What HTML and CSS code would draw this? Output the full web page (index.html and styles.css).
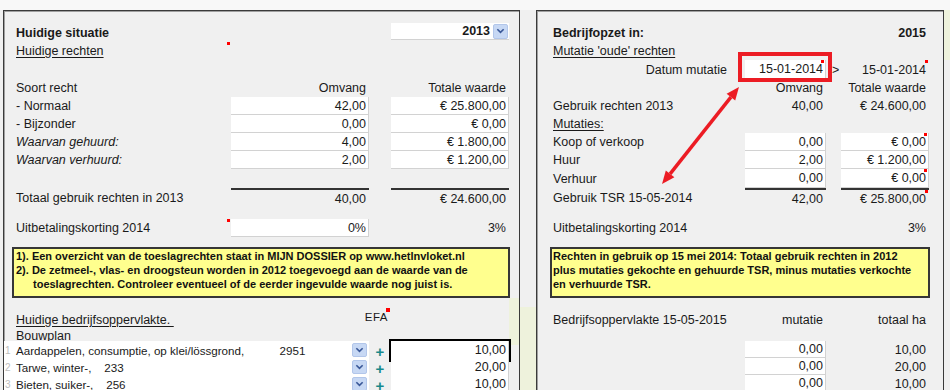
FILE: index.html
```html
<!DOCTYPE html>
<html lang="nl">
<head>
  <meta charset="UTF-8" />
  <title>Bedrijfsopzet toeslagrechten</title>
  <link rel="stylesheet" href="styles.css">
</head>
<body>
  <div class="topstrip"></div>
  <div class="sheet">

    <div class="panel left">
      <div class="row h19">
        <div class="b">Huidige situatie</div><div></div><div></div>
        <div class="select"><span>2013</span><span class="drop"><svg viewBox="0 0 10 6"><path d="M1.5 1l3.5 3.5 3.5-3.5"/></svg></span></div>
      </div>
      <div class="row">
        <div class="note"><span class="u">Huidige rechten</span></div><div></div><div></div><div></div>
      </div>
      <div class="gap h19"></div>
      <div class="row">
        <div>Soort recht</div><div class="r">Omvang</div><div></div><div class="r">Totale waarde</div>
      </div>
      <div class="row">
        <div>- Normaal</div><div class="box r">42,00</div><div></div><div class="box r">€ 25.800,00</div>
      </div>
      <div class="row">
        <div>- Bijzonder</div><div class="box r">0,00</div><div></div><div class="box r">€ 0,00</div>
      </div>
      <div class="row">
        <div class="i">Waarvan gehuurd:</div><div class="box r">4,00</div><div></div><div class="box r">€ 1.800,00</div>
      </div>
      <div class="row">
        <div class="i">Waarvan verhuurd:</div><div class="box r">2,00</div><div></div><div class="box r">€ 1.200,00</div>
      </div>
      <div class="gap h19"></div>
      <div class="row sum">
        <div>Totaal gebruik rechten in 2013</div><div class="r line">40,00</div><div></div><div class="r line">€ 24.600,00</div>
      </div>
      <div class="gap h11"></div>
      <div class="row">
        <div class="note">Uitbetalingskorting 2014</div><div class="box r">0%</div><div></div><div class="r">3%</div>
      </div>
      <div class="gap h10"></div>
      <div class="memo">
        <div>1). Een overzicht van de toeslagrechten staat in MIJN DOSSIER op www.hetlnvloket.nl</div>
        <div>2). De zetmeel-, vlas- en droogsteun worden in 2012 toegevoegd aan de waarde van de</div>
        <div class="indent">toeslagrechten. Controleer eventueel of de eerder ingevulde waarde nog juist is.</div>
      </div>
      <div class="gap h13"></div>
      <div class="row">
        <div><span class="u">Huidige bedrijfsoppervlakte.&nbsp;</span></div><div></div><div class="efa">EFA</div><div></div>
      </div>
      <div class="row h12">
        <div>Bouwplan</div><div></div><div></div><div></div>
      </div>
      <div class="row h17">
        <div class="crop"><span class="rn">1</span><span class="crop-text">Aardappelen, consumptie, op klei/lössgrond,           2951</span><span class="drop"><svg viewBox="0 0 10 6"><path d="M1.5 1l3.5 3.5 3.5-3.5"/></svg></span></div>
        <div class="plus">+</div><div class="box r sel">10,00</div>
      </div>
      <div class="row h17">
        <div class="crop"><span class="rn">2</span><span class="crop-text">Tarwe, winter-,    233</span><span class="drop"><svg viewBox="0 0 10 6"><path d="M1.5 1l3.5 3.5 3.5-3.5"/></svg></span></div>
        <div class="plus">+</div><div class="box r">20,00</div>
      </div>
      <div class="row h17">
        <div class="crop"><span class="rn">3</span><span class="crop-text">Bieten, suiker-,    256</span><span class="drop"><svg viewBox="0 0 10 6"><path d="M1.5 1l3.5 3.5 3.5-3.5"/></svg></span></div>
        <div class="plus">+</div><div class="box r">10,00</div>
      </div>
    </div>

    <div class="gutter"></div>

    <div class="panel right">
      <div class="row h19">
        <div class="b">Bedrijfopzet in:</div><div></div><div></div><div class="b r">2015</div>
      </div>
      <div class="row">
        <div><span class="u">Mutatie 'oude' rechten</span></div><div></div><div></div><div></div>
      </div>
      <div class="row h19">
        <div class="r lbl">Datum mutatie</div>
        <div class="box r datum note">15-01-2014</div>
        <div class="gt">&gt;</div>
        <div class="r note">15-01-2014</div>
      </div>
      <div class="row">
        <div></div><div class="r">Omvang</div><div></div><div class="r">Totale waarde</div>
      </div>
      <div class="row">
        <div>Gebruik rechten 2013</div><div class="r">40,00</div><div></div><div class="r">€ 24.600,00</div>
      </div>
      <div class="row">
        <div><span class="u">Mutaties:</span></div><div></div><div></div><div></div>
      </div>
      <div class="row">
        <div>Koop of verkoop</div><div class="box r">0,00</div><div></div><div class="box r note">€ 0,00</div>
      </div>
      <div class="row">
        <div>Huur</div><div class="box r">2,00</div><div></div><div class="box r">€ 1.200,00</div>
      </div>
      <div class="row h19">
        <div>Verhuur</div><div class="box r">0,00</div><div></div><div class="box r note">€ 0,00</div>
      </div>
      <div class="row sum">
        <div>Gebruik TSR 15-05-2014</div><div class="r line">42,00</div><div></div><div class="r line note">€ 25.800,00</div>
      </div>
      <div class="gap h11"></div>
      <div class="row">
        <div>Uitbetalingskorting 2014</div><div></div><div></div><div class="r">3%</div>
      </div>
      <div class="gap h10"></div>
      <div class="memo">
        <div>Rechten in gebruik op 15 mei 2014: Totaal gebruik rechten in 2012</div>
        <div>plus mutaties gekochte en gehuurde TSR, minus mutaties verkochte</div>
        <div>en verhuurde TSR.</div>
      </div>
      <div class="gap h13"></div>
      <div class="row">
        <div>Bedrijfsoppervlakte 15-05-2015</div><div class="r">mutatie</div><div></div><div class="r">totaal ha</div>
      </div>
      <div class="gap h12"></div>
      <div class="row h17">
        <div></div><div class="box r">0,00</div><div></div><div class="r">10,00</div>
      </div>
      <div class="row h17">
        <div></div><div class="box r">0,00</div><div></div><div class="r">20,00</div>
      </div>
      <div class="row h17">
        <div></div><div class="box r">0,00</div><div></div><div class="r">10,00</div>
      </div>
    </div>

    <div class="edge"></div>
  </div>

  <!-- annotation arrow between the date field and the TSR total -->
  <svg class="arrow" width="950" height="390" viewBox="0 0 950 390">
    <line x1="730.9" y1="97.2" x2="670.1" y2="173.8" />
    <polygon points="739,87 735.2,100.6 726.6,93.8" />
    <polygon points="662,184 674.4,177.2 665.8,170.4" />
  </svg>
</body>
</html>
```

FILE: styles.css
```css
:root {
  --bg: #f0f0f0;
  --text: #1a1a1a;
  --cell: #fff;
  --cell-edge: #d2d2d2;
  --memo: #ffff8e;
  --green: #eef2dc;
  --red: #ec1c24;
}
* {
  margin: 0;
  padding: 0;
  box-sizing: border-box;
}
body {
  position: relative;
  width: 950px;
  height: 390px;
  overflow: hidden;
  background: var(--bg);
  font-family: "Liberation Sans", Arial, sans-serif;
  font-size: 12.5px;
  color: var(--text);
}
.topstrip {
  height: 10px;
  background: #f8f8f8;
}
.sheet {
  display: flex;
  padding-left: 3px;
}
.panel {
  height: 400px;
  padding-top: 12px;
  border: 1px solid #3a3a3a;
  box-shadow: inset 1px 1px 0 #a0a0a0;
}
.left {
  width: 517px;
  padding-left: 12px;
  padding-right: 10px;
  background: linear-gradient(var(--green), var(--green)) right 0 top 287px / 10px 47px no-repeat, var(--bg);
}
.right {
  width: 408px;
  padding-left: 16px;
  padding-right: 14px;
  background: var(--bg);
}
.gutter {
  width: 16px;
  height: 380px;
  background: linear-gradient(var(--bg) 297px, var(--green) 297px);
}
.edge {
  width: 6px;
  height: 380px;
  background: linear-gradient(var(--green) 50px, var(--bg) 50px);
}

/* rows */
.row {
  display: grid;
  height: 18px;
}
.left .row {
  grid-template-columns: 215px 138px 22px 118px;
}
.right .row {
  grid-template-columns: 192px 81px 15px 88px;
}
.row > div {
  display: flex;
  align-items: center;
  white-space: nowrap;
}
.h10 { height: 10px; }
.h11 { height: 11px; }
.h12 { height: 12px; }
.h13 { height: 13px; }
.h17 { height: 17px; }
.h19 { height: 19px; }
.row.sum { height: 20px; }

.b { font-weight: bold; }
.i { font-style: italic; }
.u { text-decoration: underline; text-underline-offset: 2px; }
.r {
  justify-content: flex-end;
  padding-right: 3px;
}
.lbl { padding-right: 18px; }
.gt { padding-left: 6px; }
.box {
  background: var(--cell);
  border-right: 1px solid var(--cell-edge);
  border-bottom: 1px solid var(--cell-edge);
}
.box.r { padding-right: 2px; }
.line { border-top: 2px solid #333; }

/* comment markers */
.note { position: relative; }
.note::after {
  content: "";
  position: absolute;
  top: 0;
  right: 1px;
  width: 3px;
  height: 3px;
  background: #f00;
}
.efa {
  position: relative;
  align-self: start;
  justify-content: flex-end;
  padding-right: 3px;
  line-height: 12px;
  letter-spacing: 0.5px;
  font-size: 11.5px;
}
.efa::after {
  content: "";
  position: absolute;
  top: -3px;
  right: 1px;
  width: 4px;
  height: 4px;
  background: #f00;
}
.datum::before {
  content: "";
  position: absolute;
  left: -7px;
  right: -7px;
  top: -8px;
  bottom: -4px;
  border: 4px solid var(--red);
}

/* year dropdown */
.select {
  align-self: start;
  height: 17px;
  justify-content: flex-end;
  gap: 3px;
  padding-right: 1px;
  background: var(--cell);
  border-bottom: 1px solid var(--cell-edge);
  font-weight: bold;
}
.drop {
  display: flex;
  align-items: center;
  justify-content: center;
  width: 15px;
  height: 15px;
  background: #c7d8f4;
  border: 1px solid #b2c6ea;
  border-radius: 2px;
}
.drop svg {
  width: 9px;
  height: 6px;
  fill: none;
  stroke: #3a5898;
  stroke-width: 1.8;
}

/* memo boxes */
.memo {
  height: 51px;
  margin: 0 -1px 0 -4px;
  padding-left: 2px;
  background: var(--memo);
  border: 2px solid #363636;
  font-size: 11px;
  font-weight: bold;
  line-height: 14px;
  white-space: nowrap;
  color: #111;
}
.right .memo {
  margin-left: -3px;
  padding-left: 1px;
}
.memo .indent { padding-left: 17px; }

/* crop plan rows */
.crop {
  grid-column: span 2;
  margin-left: -12px;
  background: var(--cell);
  border-bottom: 1px solid #dcdcdc;
}
.rn {
  width: 12px;
  padding-left: 1px;
  font-size: 10px;
  color: #bdbdbd;
}
.crop-text {
  flex: 1;
  white-space: pre;
  font-size: 11.6px;
}
.crop .drop {
  width: 15px;
  height: 14px;
  margin-right: 2px;
}
.plus {
  justify-content: center;
  color: #17898b;
  font-weight: bold;
  font-size: 15px;
  padding-top: 2px;
}
.sel { outline: 2px solid #000; }

.arrow {
  position: absolute;
  left: 0;
  top: 0;
  pointer-events: none;
}
.arrow line {
  stroke: var(--red);
  stroke-width: 3.5;
}
.arrow polygon {
  fill: var(--red);
}
```
